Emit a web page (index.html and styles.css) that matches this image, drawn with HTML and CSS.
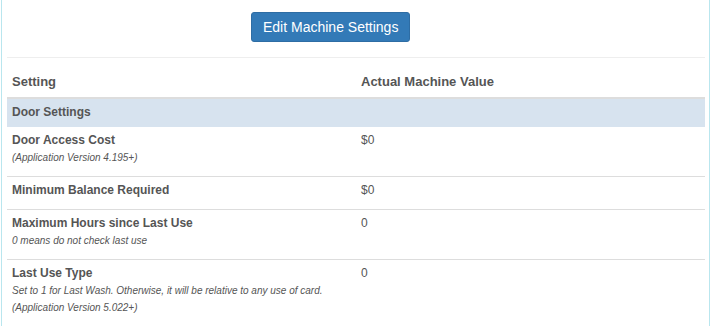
FILE: index.html
```html
<!DOCTYPE html>
<html lang="en">
<head>
  <meta charset="UTF-8">
  <meta name="viewport" content="width=device-width, initial-scale=1.0">
  <title>Machine Settings</title>
  <link rel="stylesheet" href="styles.css">
</head>
<body>
  <div class="panel">
    <div class="toolbar">
      <button class="btn-primary" type="button">Edit Machine Settings</button>
    </div>
    <hr class="divider">

    <table class="settings-table">
      <thead>
        <tr>
          <th>Setting</th>
          <th>Actual Machine Value</th>
        </tr>
      </thead>
      <tbody>
        <tr class="group-row">
          <td colspan="2">Door Settings</td>
        </tr>
        <tr>
          <td>
            <div class="setting-name">Door Access Cost</div>
            <div class="setting-note">(Application Version 4.195+)</div>
          </td>
          <td class="setting-value">$0</td>
        </tr>
        <tr>
          <td>
            <div class="setting-name">Minimum Balance Required</div>
          </td>
          <td class="setting-value">$0</td>
        </tr>
        <tr>
          <td>
            <div class="setting-name">Maximum Hours since Last Use</div>
            <div class="setting-note">0 means do not check last use</div>
          </td>
          <td class="setting-value">0</td>
        </tr>
        <tr>
          <td>
            <div class="setting-name">Last Use Type</div>
            <div class="setting-note">Set to 1 for Last Wash. Otherwise, it will be relative to any use of card.</div>
            <div class="setting-note">(Application Version 5.022+)</div>
          </td>
          <td class="setting-value">0</td>
        </tr>
      </tbody>
    </table>
  </div>
</body>
</html>
```

FILE: styles.css
```css
* {
  margin: 0;
  padding: 0;
  box-sizing: border-box;
}

body {
  font-family: "Liberation Sans", Arial, sans-serif;
  font-size: 12px;
  line-height: 17px;
  color: #555;
  background: #fff;
}

/* Panel */
.panel {
  width: 709px;
  margin-left: 1px;
  min-height: 326px;
  padding: 12px 4px 0 5px;
  border-left: 1px solid #b9e6ee;
  border-right: 1px solid #b9e6ee;
}

.toolbar {
  display: flex;
  padding-left: 244px;
}

.btn-primary {
  font-family: inherit;
  font-size: 14px;
  line-height: 18px;
  padding: 5px 11px;
  color: #fff;
  background-color: #337ab7;
  border: 1px solid #2e6da4;
  border-radius: 3px;
  cursor: pointer;
}

.divider {
  border: none;
  border-top: 1px solid #eee;
  margin-top: 15px;
}

/* Table */
.settings-table {
  width: 698px;
  border-collapse: collapse;
  table-layout: fixed;
}

.settings-table th {
  width: 50%;
  text-align: left;
  font-size: 13px;
  font-weight: bold;
  padding: 15px 5px 7px;
  border-bottom: 2px solid #ddd;
}

.settings-table td {
  vertical-align: top;
  padding: 5px 5px 10px;
  border-bottom: 1px solid #ddd;
}

.settings-table .group-row td {
  font-weight: bold;
  padding: 5px 5px 6px;
  background: #d7e3ef;
  border-bottom: none;
}

.setting-name {
  font-weight: bold;
}

.setting-note {
  font-size: 10px;
  font-style: italic;
}
```
